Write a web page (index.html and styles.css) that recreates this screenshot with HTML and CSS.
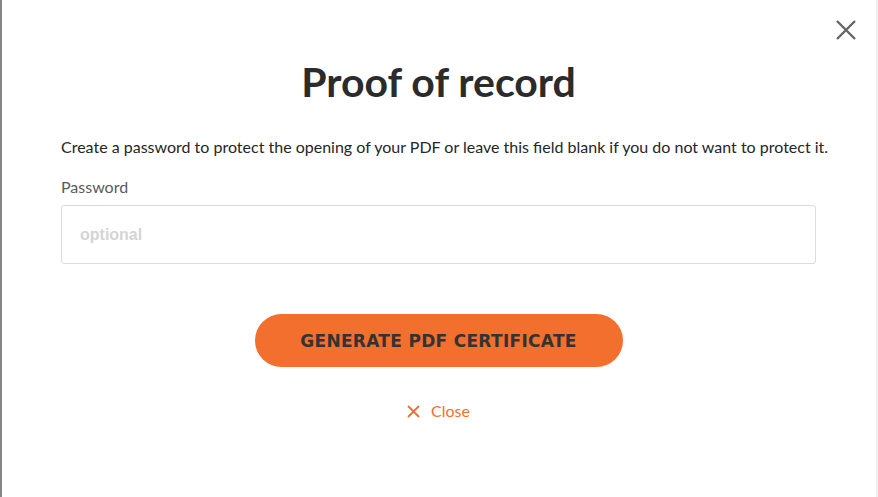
FILE: index.html
```html
<!DOCTYPE html>
<html>
<head>
<meta charset="utf-8">
<link rel="stylesheet" href="styles.css">
</head>
<body>
<div class="page">
  <div class="edge-left"></div>
  <div class="modal">
    <button class="close-x" aria-label="Close">
      <svg width="22" height="22" viewBox="0 0 22 22"><path d="M2 2 L20 20 M20 2 L2 20" stroke="#666" stroke-width="2.4" fill="none"/></svg>
    </button>
    <h1 class="title">Proof of record</h1>
    <p class="desc">Create a password to protect the opening of your PDF or leave this field blank if you do not want to protect it.</p>
    <label class="label">Password</label>
    <input class="input" type="password" placeholder="optional">
    <div class="actions">
      <button class="btn">GENERATE PDF CERTIFICATE</button>
      <a class="close-link" href="#">
        <svg width="13" height="13" viewBox="0 0 13 13"><path d="M1 1 L12 12 M12 1 L1 12" stroke="#f26f2e" stroke-width="1.8" fill="none"/></svg>
        <span>Close</span>
      </a>
    </div>
  </div>
  <div class="edge-right"></div>
</div>
</body>
</html>
```
FILE: styles.css
```css
html, body {
  margin: 0;
  padding: 0;
  height: 100%;
  overflow: hidden;
}
body {
  font-family: Lato, "Liberation Sans", sans-serif;
  background: #fff;
}
.page {
  display: flex;
  width: 878px;
  height: 497px;
}
.edge-left {
  flex: none;
  width: 2px;
  background: #858585;
}
.edge-right {
  flex: none;
  width: 2px;
  background: #efefef;
}
.modal {
  flex: 1;
  min-width: 0;
  background: #fff;
  position: relative;
  display: flex;
  flex-direction: column;
  padding: 0 60px 0 59px;
}
.close-x {
  position: absolute;
  top: 19px;
  right: 19px;
  border: 0;
  background: none;
  padding: 0;
  width: 22px;
  height: 22px;
}
.title {
  margin: 58px 0 0;
  text-align: center;
  font-size: 41px;
  line-height: 48px;
  font-weight: 700;
  color: #2b2b2b;
}
.desc {
  margin: 31px 0 0;
  font-size: 16px;
  line-height: 20px;
  color: #262626;
  white-space: nowrap;
  min-width: 0;
}
.label {
  margin-top: 20px;
  font-size: 16px;
  line-height: 20px;
  color: #5a5a5a;
}
.input {
  margin-top: 8px;
  height: 59px;
  box-sizing: border-box;
  border: 1px solid #dcdcdc;
  border-radius: 3px;
  padding: 0 18px;
  font-family: "Liberation Sans", Arial, sans-serif;
  font-size: 16px;
  font-weight: 700;
  outline: none;
}
.input::placeholder {
  color: #d4d4d4;
}
.actions {
  display: flex;
  flex-direction: column;
  align-items: center;
}
.btn {
  margin-top: 50px;
  width: 368px;
  height: 53px;
  border: 0;
  border-radius: 27px;
  background: #f26f2e;
  color: #333;
  font-family: "DejaVu Sans", sans-serif;
  font-weight: 700;
  font-size: 17px;
  letter-spacing: 0.3px;
}
.close-link {
  margin-top: 34px;
  display: flex;
  align-items: center;
  gap: 11px;
  color: #f26f2e;
  text-decoration: none;
  font-size: 16px;
  line-height: 20px;
}
```
